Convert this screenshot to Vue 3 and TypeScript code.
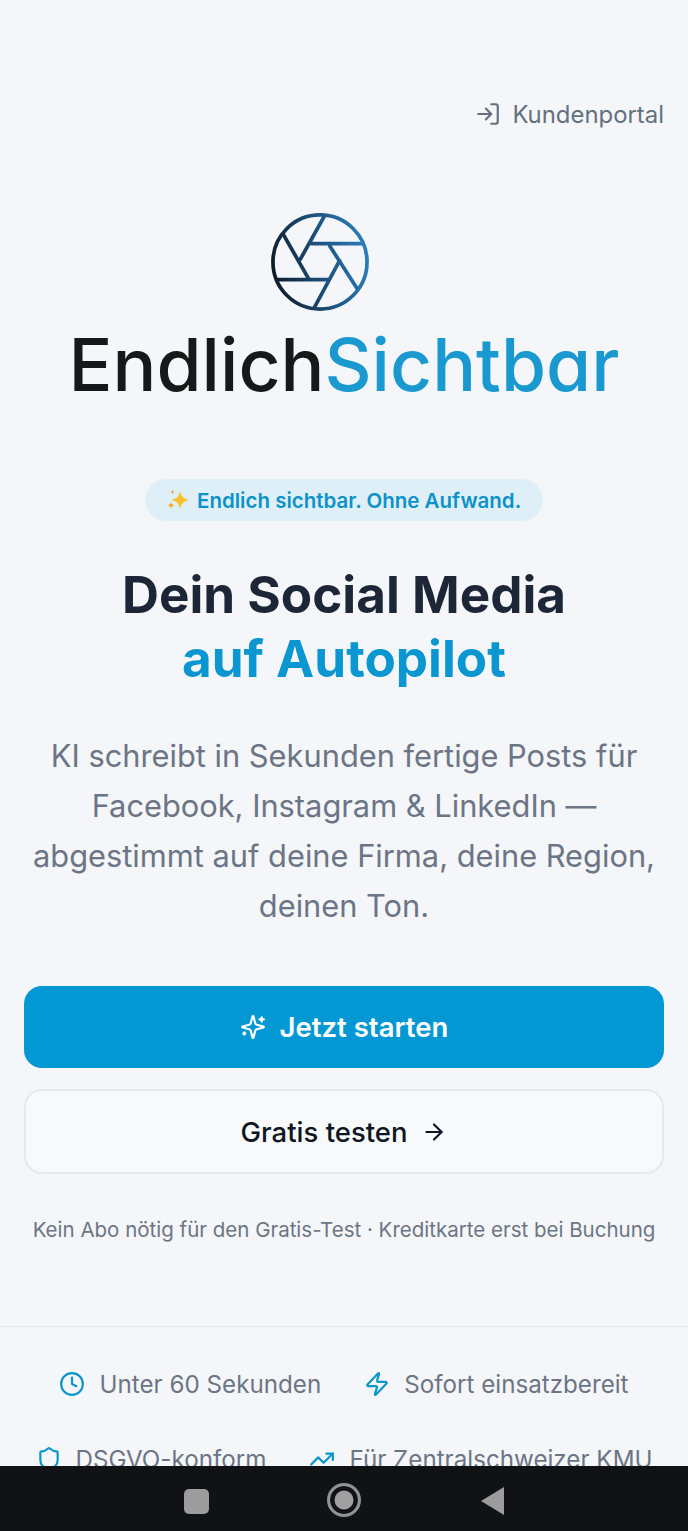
<script setup lang="ts">
const lines: string[] = [
  'KI schreibt in Sekunden fertige Posts für',
  'Facebook, Instagram & LinkedIn —',
  'abgestimmt auf deine Firma, deine Region,',
  'deinen Ton.',
]
</script>

<template>
  <div class="page">
    <header class="top">
      <a class="portal">
        <svg class="ico-portal" viewBox="0 0 24 24" fill="none" stroke="currentColor" stroke-width="2" stroke-linecap="round" stroke-linejoin="round">
          <path d="M15 3h4a2 2 0 0 1 2 2v14a2 2 0 0 1-2 2h-4" />
          <polyline points="10 17 15 12 10 7" />
          <line x1="15" y1="12" x2="3" y2="12" />
        </svg>
        <span>Kundenportal</span>
      </a>
    </header>

    <div class="logo">
      <svg class="aperture" viewBox="0 0 100 100" fill="none" stroke="url(#apGrad)" stroke-width="3.800" stroke-linecap="round">
        <defs>
          <linearGradient id="apGrad" gradientUnits="userSpaceOnUse" x1="0" y1="60" x2="100" y2="40">
            <stop offset="0" stop-color="#0f1a26" />
            <stop offset="0.5" stop-color="#1c4f7c" />
            <stop offset="1" stop-color="#2a80bd" />
          </linearGradient>
        </defs>
        <circle cx="50" cy="50" r="48" />
        <path d="M54.400 3.300 30 47" />
        <path d="M41.700 31.300H92" />
        <path d="M60 33.700 88 77.300" />
        <path d="M70 48.700 44.200 96.600" />
        <path d="M58.300 68H6.500" />
        <path d="M38.300 67 12.700 22" />
      </svg>
      <div class="wordmark"><span class="dark">Endlich</span><span class="blue">Sichtbar</span></div>
    </div>

    <div class="badge">
      <svg class="ico-spark" viewBox="0 0 24 24">
        <path fill="#fcc22e" d="M14 3.500c.9 5 3 7.300 8.500 8.500-5.500 1.200-7.600 3.500-8.500 8.500-.9-5-3-7.300-8.500-8.500 5.500-1.200 7.600-3.500 8.500-8.500z" />
        <path fill="#f7ab1c" d="M5.500 13.500c.4 2 1.200 2.800 3.200 3.300-2 .5-2.800 1.300-3.200 3.300-.4-2-1.200-2.800-3.200-3.300 2-.5 2.800-1.300 3.200-3.300z" />
        <path fill="#e8a33a" d="M7 2.500c.3 1.300.8 1.800 2 2.100-1.200.3-1.700.8-2 2.100-.3-1.300-.8-1.800-2-2.100 1.200-.3 1.700-.8 2-2.100z" />
      </svg>
      <span>Endlich sichtbar. Ohne Aufwand.</span>
    </div>

    <h1 class="title">Dein Social Media<br /><span>auf Autopilot</span></h1>

    <p class="lead">
      <span v-for="line in lines" :key="line">{{ line }}</span>
    </p>

    <div class="actions">
      <button class="btn primary">
        <svg class="ico-btn" viewBox="0 0 24 24" fill="none" stroke="currentColor" stroke-width="2" stroke-linecap="round" stroke-linejoin="round">
          <path d="M9.937 15.500A2 2 0 0 0 8.500 14.063l-6.135-1.582a.5.5 0 0 1 0-.962L8.500 9.936A2 2 0 0 0 9.937 8.500l1.582-6.135a.5.5 0 0 1 .963 0L14.063 8.500A2 2 0 0 0 15.500 9.937l6.135 1.581a.5.5 0 0 1 0 .964L15.500 14.063a2 2 0 0 0-1.437 1.437l-1.582 6.135a.5.5 0 0 1-.963 0z" />
          <path d="M20 3v4" />
          <path d="M22 5h-4" />
          <path d="M4 17v2" />
          <path d="M5 18H3" />
        </svg>
        Jetzt starten
      </button>
      <button class="btn ghost">
        Gratis testen
        <svg class="ico-btn" viewBox="0 0 24 24" fill="none" stroke="currentColor" stroke-width="2" stroke-linecap="round" stroke-linejoin="round">
          <path d="M5 12h14" />
          <path d="m12 5 7 7-7 7" />
        </svg>
      </button>
    </div>

    <p class="note">Kein Abo nötig für den Gratis-Test · Kreditkarte erst bei Buchung</p>

    <section class="features">
      <div class="feature">
        <svg viewBox="0 0 24 24" fill="none" stroke="currentColor" stroke-width="2" stroke-linecap="round" stroke-linejoin="round">
          <circle cx="12" cy="12" r="10" />
          <polyline points="12 6 12 12 16 14" />
        </svg>
        <span>Unter 60 Sekunden</span>
      </div>
      <div class="feature">
        <svg viewBox="0 0 24 24" fill="none" stroke="currentColor" stroke-width="2" stroke-linecap="round" stroke-linejoin="round">
          <path d="M4 14a1 1 0 0 1-.78-1.630l9.900-10.200a.5.5 0 0 1 .86.46l-1.920 6.020A1 1 0 0 0 13 10h7a1 1 0 0 1 .78 1.630l-9.900 10.200a.5.5 0 0 1-.86-.46l1.920-6.020A1 1 0 0 0 11 14z" />
        </svg>
        <span>Sofort einsatzbereit</span>
      </div>
      <div class="feature">
        <svg viewBox="0 0 24 24" fill="none" stroke="currentColor" stroke-width="2" stroke-linecap="round" stroke-linejoin="round">
          <path d="M20 13c0 5-3.500 7.500-7.660 8.950a1 1 0 0 1-.67-.01C7.500 20.500 4 18 4 13V6a1 1 0 0 1 1-1c2 0 4.500-1.200 6.240-2.720a1.170 1.170 0 0 1 1.520 0C14.510 3.810 17 5 19 5a1 1 0 0 1 1 1z" />
        </svg>
        <span>DSGVO-konform</span>
      </div>
      <div class="feature">
        <svg viewBox="0 0 24 24" fill="none" stroke="currentColor" stroke-width="2" stroke-linecap="round" stroke-linejoin="round">
          <path d="M16 7h6v6" />
          <path d="m22 7-8.500 8.500-5-5L2 17" />
        </svg>
        <span>Für Zentralschweizer KMU</span>
      </div>
    </section>

    <nav class="sysnav">
      <span class="nav-square"></span>
      <span class="nav-circle"></span>
      <span class="nav-back"></span>
    </nav>
  </div>
</template>

<style>
html,
body {
  margin: 0;
  background: #f5f6f9;
}
</style>

<style scoped>
* {
  box-sizing: border-box;
}
.page {
  position: relative;
  width: 688px;
  height: 1531px;
  overflow: hidden;
  background: #f5f6f9;
  font-family: Inter, "Noto Sans", sans-serif;
  color: #64748b;
}
.top {
  display: flex;
  justify-content: flex-end;
  padding: 96px 24px 0;
}
.portal {
  display: flex;
  align-items: center;
  gap: 11px;
  height: 36px;
  font-size: 23.9px;
  color: #64707f;
}
.ico-portal {
  width: 26px;
  height: 26px;
}
.logo {
  display: flex;
  flex-direction: column;
  align-items: center;
  margin-top: 81px;
}
.aperture {
  width: 98px;
  height: 98px;
  margin-right: 48px;
}
.wordmark {
  margin-top: 8px;
  font-size: 73px;
  line-height: 92px;
  font-weight: 450;
  font-feature-settings: "cv11";
}
.dark {
  color: #17181a;
}
.blue {
  color: #1a98d0;
}
.badge {
  display: flex;
  align-items: center;
  gap: 6px;
  width: 398px;
  height: 42px;
  margin: 68px auto 0;
  padding-left: 20px;
  border-radius: 21px;
  background: #dfeff8;
  color: #0b93c9;
  font-size: 20.5px;
  font-weight: 600;
}
.ico-spark {
  width: 26px;
  height: 26px;
}
.title {
  margin: 41px 0 0;
  text-align: center;
  font-size: 51.2px;
  line-height: 64px;
  font-weight: 700;
  color: #1c2636;
}
.title span {
  color: #0a96d0;
}
.lead {
  display: flex;
  flex-direction: column;
  align-items: center;
  margin: 41px 0 0;
  font-size: 30.8px;
  line-height: 50px;
  color: #6b7585;
}
.actions {
  display: flex;
  flex-direction: column;
  gap: 21px;
  margin-top: 55px;
  padding: 0 24px;
}
.btn {
  display: flex;
  align-items: center;
  justify-content: center;
  gap: 14px;
  width: 100%;
  border-radius: 18px;
  font-family: inherit;
  font-size: 27.5px;
  font-weight: 600;
}
.primary {
  height: 82px;
  border: none;
  background: #0398d4;
  color: #fff;
}
.ghost {
  height: 85px;
  border: 2px solid #e6e8eb;
  background: #f8f9fa;
  color: #0f1623;
  font-weight: 550;
}
.ico-btn {
  width: 26px;
  height: 26px;
}
.note {
  margin: 44px 0 0;
  text-align: center;
  font-size: 20.5px;
  line-height: 24px;
  color: #6b7585;
}
.features {
  display: flex;
  flex-wrap: wrap;
  justify-content: center;
  gap: 39px 43px;
  margin-top: 84px;
  padding: 39px 16px 0;
  border-top: 1px solid #e6e8ec;
}
.feature {
  display: flex;
  align-items: center;
  gap: 14px;
  height: 36px;
  font-size: 24.2px;
  color: #6b7585;
}
.feature svg {
  width: 26px;
  height: 26px;
  color: #0a96c8;
}
.sysnav {
  position: absolute;
  left: 0;
  right: 0;
  bottom: 0;
  height: 65px;
  background: #111216;
}
.nav-square {
  position: absolute;
  left: 184px;
  top: 23px;
  width: 25px;
  height: 25px;
  border-radius: 5px;
  background: #9c9c9c;
}
.nav-circle {
  position: absolute;
  left: 327px;
  top: 17px;
  width: 34px;
  height: 34px;
  border: 3.500px solid #929292;
  border-radius: 50%;
  background: #a0a0a0;
  box-shadow: inset 0 0 0 4.500px #111216;
}
.nav-back {
  position: absolute;
  left: 481px;
  top: 21px;
  width: 0;
  height: 0;
  border-top: 14px solid transparent;
  border-bottom: 14px solid transparent;
  border-right: 23px solid #9c9c9c;
}
</style>
